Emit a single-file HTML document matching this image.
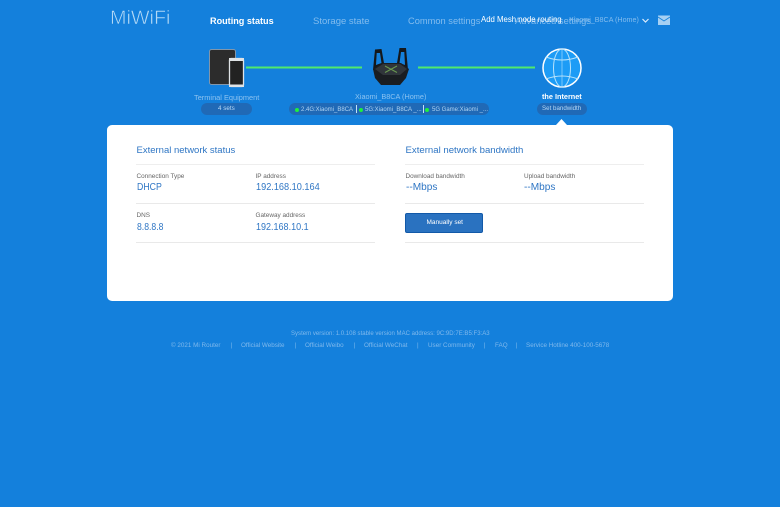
<!DOCTYPE html>
<html><head><meta charset="utf-8">
<style>
html,body{margin:0;padding:0;width:780px;height:507px;overflow:hidden;background:#1480dc;font-family:"Liberation Sans",sans-serif}
.t{position:absolute;white-space:nowrap;line-height:1}
.pill{position:absolute;background:#2069b6;border-radius:7px;height:12px}
.line{position:absolute;background:#e9e9e9;height:1px}
.lb{color:#666;font-size:6.4px}
.v{color:#2f76c4;font-size:10.300px;transform-origin:0 0}
.h{color:#2f76c4;font-size:9.500px}
.f{color:#7fb8ec;font-size:6.300px}
.dot{position:absolute;width:4px;height:4px;border-radius:50%;background:#1ef03c}
</style></head><body>
<div class="t" style="left:110px;top:8.500px;font-size:19.800px;color:#b4d9f6;-webkit-text-stroke:.55px #1480dc;letter-spacing:0">MiWiFi</div>
<div class="t" style="left:210px;top:16.500px;font-size:9.100px;color:#fff;font-weight:bold">Routing status</div>
<div class="t" style="left:313px;top:16.500px;font-size:9.500px;color:#83bcee">Storage state</div>
<div class="t" style="left:408px;top:16.500px;font-size:9.300px;color:#83bcee">Common settings</div>
<div class="t" style="left:515px;top:16.500px;font-size:9.300px;color:#83bcee">Advanced settings</div>
<div class="t" style="left:481px;top:16px;font-size:7.800px;color:#fff">Add Mesh node routing</div>
<div class="t" style="left:569px;top:16.500px;font-size:7.150px;color:#83bcee">Xiaomi_B8CA (Home)</div>
<svg style="position:absolute;left:0;top:0" width="780" height="125">
<path d="M642.500 19l3 3 3-3" fill="none" stroke="#dcecfb" stroke-width="1.200"/>
<rect x="658" y="15.500" width="12" height="9.500" fill="#a6d0f3"/>
<path d="M658 17l6 4 6-4" fill="none" stroke="#1480dc" stroke-width=".8"/>
<rect x="246" y="66.500" width="116" height="2" fill="#50ea6c"/>
<rect x="418" y="66.500" width="117" height="2" fill="#50ea6c"/>
<rect x="209.500" y="49.500" width="26" height="35" rx="2" fill="#2c2c2c" stroke="#8296aa"/>
<rect x="229.500" y="58.500" width="14" height="28" rx="1.500" fill="#222" stroke="#dfe3e6" stroke-width="1.300"/>
<rect x="229" y="58" width="15" height="3" fill="#dfe3e6"/>
<rect x="229" y="84.500" width="15" height="2.500" fill="#dfe3e6"/>
<path fill-rule="evenodd" d="M373 70L375 49.500 381.500 49 384.500 66 376 70zM376.700 53L376 65 381.500 63 380 53z" fill="#14181c"/>
<path fill-rule="evenodd" d="M408 70L406 48 399.500 48 396.500 66 405 70zM404.300 52L405 65 399.500 63 401 52z" fill="#14181c"/>
<path d="M373 69L382 63H401L409 69L406 78L400 85H381L375 78z" fill="#1a1d21"/>
<path d="M375 69L383 64H400L407 69L400 75H383z" fill="#30353a"/>
<path d="M385 66l12 6.500M397 66l-12 6.500" stroke="#6a9a50" stroke-width="1"/>
<circle cx="562" cy="68" r="19" fill="#1d9cf6" stroke="#fff" stroke-width="1.500"/>
<g fill="none" stroke="#b7e2fb" stroke-width="1">
<ellipse cx="562" cy="68" rx="8.500" ry="19"/>
<path d="M562 49v38" stroke-opacity=".6"/>
<path d="M546 57q16 6 32 0M546 79q16-6 32 0"/>
</g>
<path d="M556 125l5.500-6 5.500 6z" fill="#fff"/>
</svg>
<div class="t" style="left:194px;top:94px;font-size:7.400px;color:#8cc2f0">Terminal Equipment</div>
<div class="pill" style="left:201px;top:103px;width:51px"></div>
<div class="t" style="left:218px;top:106px;font-size:6.300px;color:#b8d8f4">4 sets</div>
<div class="t" style="left:355px;top:93px;font-size:7.300px;color:#8cc2f0">Xiaomi_B8CA (Home)</div>
<div class="pill" style="left:289px;top:103px;width:200px"></div>
<div class="dot" style="left:295px;top:108px"></div>
<div class="t" style="left:301px;top:107px;font-size:6px;color:#b0d4f2">2.4G:Xiaomi_B8CA</div>
<div style="position:absolute;left:356px;top:105px;width:1px;height:8px;background:#c4e0f6"></div>
<div class="dot" style="left:359px;top:108px"></div>
<div class="t" style="left:365px;top:107px;font-size:6px;color:#b0d4f2">5G:Xiaomi_B8CA _...</div>
<div style="position:absolute;left:423px;top:105px;width:1px;height:8px;background:#c4e0f6"></div>
<div class="dot" style="left:425px;top:108px"></div>
<div class="t" style="left:432px;top:107px;font-size:6px;color:#b0d4f2">5G Game:Xiaomi _...</div>
<div class="t" style="left:542px;top:93px;font-size:7.300px;color:#fff;font-weight:bold">the Internet</div>
<div class="pill" style="left:537px;top:103px;width:50px"></div>
<div class="t" style="left:542px;top:106px;font-size:6.200px;color:#b8d8f4">Set bandwidth</div>

<div style="position:absolute;left:107px;top:125px;width:566px;height:176px;background:#fff;border-radius:5px"></div>
<div class="t h" style="left:136.500px;top:146px">External network status</div>
<div class="line" style="left:136px;top:164px;width:239px;background:#eee"></div>
<div class="t lb" style="left:136.500px;top:173.500px">Connection Type</div>
<div class="t lb" style="left:255.500px;top:173.500px">IP address</div>
<div class="t v" style="left:136.500px;top:183px;transform:scaleX(.85)">DHCP</div>
<div class="t v" style="left:255.500px;top:183px;transform:scaleX(.89)">192.168.10.164</div>
<div class="line" style="left:136px;top:203px;width:239px"></div>
<div class="t lb" style="left:136.500px;top:213px">DNS</div>
<div class="t lb" style="left:255.500px;top:213px">Gateway address</div>
<div class="t v" style="left:136.500px;top:223px;transform:scaleX(.84)">8.8.8.8</div>
<div class="t v" style="left:255.500px;top:223px;transform:scaleX(.875)">192.168.10.1</div>
<div class="line" style="left:136px;top:242px;width:239px"></div>

<div class="t h" style="left:405.500px;top:146px;font-size:9.600px">External network bandwidth</div>
<div class="line" style="left:405px;top:164px;width:239px;background:#eee"></div>
<div class="t lb" style="left:405.500px;top:173.500px">Download bandwidth</div>
<div class="t lb" style="left:524px;top:173.500px">Upload bandwidth</div>
<div class="t v" style="left:405.500px;top:183px;transform:scaleX(.98)">--Mbps</div>
<div class="t v" style="left:524px;top:183px;transform:scaleX(.98)">--Mbps</div>
<div class="line" style="left:405px;top:203px;width:239px"></div>
<div style="position:absolute;left:405px;top:213px;width:78px;height:20px;box-sizing:border-box;background:#2a72c0;border:1px solid #1259a8;border-radius:2px"></div>
<div class="t" style="left:426.500px;top:220px;font-size:6.500px;color:#fff">Manually set</div>
<div class="line" style="left:405px;top:242px;width:239px"></div>

<div class="t f" style="left:291px;top:331px;font-size:6.050px">System version: 1.0.108 stable version MAC address: 9C:9D:7E:B5:F3:A3</div>
<div class="t f" style="left:171px;top:343px">© 2021 Mi Router</div>
<div class="t f" style="left:230.500px;top:343px">|</div>
<div class="t f" style="left:241px;top:343px">Official Website</div>
<div class="t f" style="left:294.500px;top:343px">|</div>
<div class="t f" style="left:305px;top:343px">Official Weibo</div>
<div class="t f" style="left:353.500px;top:343px">|</div>
<div class="t f" style="left:364px;top:343px">Official WeChat</div>
<div class="t f" style="left:417px;top:343px">|</div>
<div class="t f" style="left:428px;top:343px">User Community</div>
<div class="t f" style="left:483.500px;top:343px">|</div>
<div class="t f" style="left:495px;top:343px">FAQ</div>
<div class="t f" style="left:515.500px;top:343px">|</div>
<div class="t f" style="left:526px;top:343px">Service Hotline 400-100-5678</div>
</body></html>
